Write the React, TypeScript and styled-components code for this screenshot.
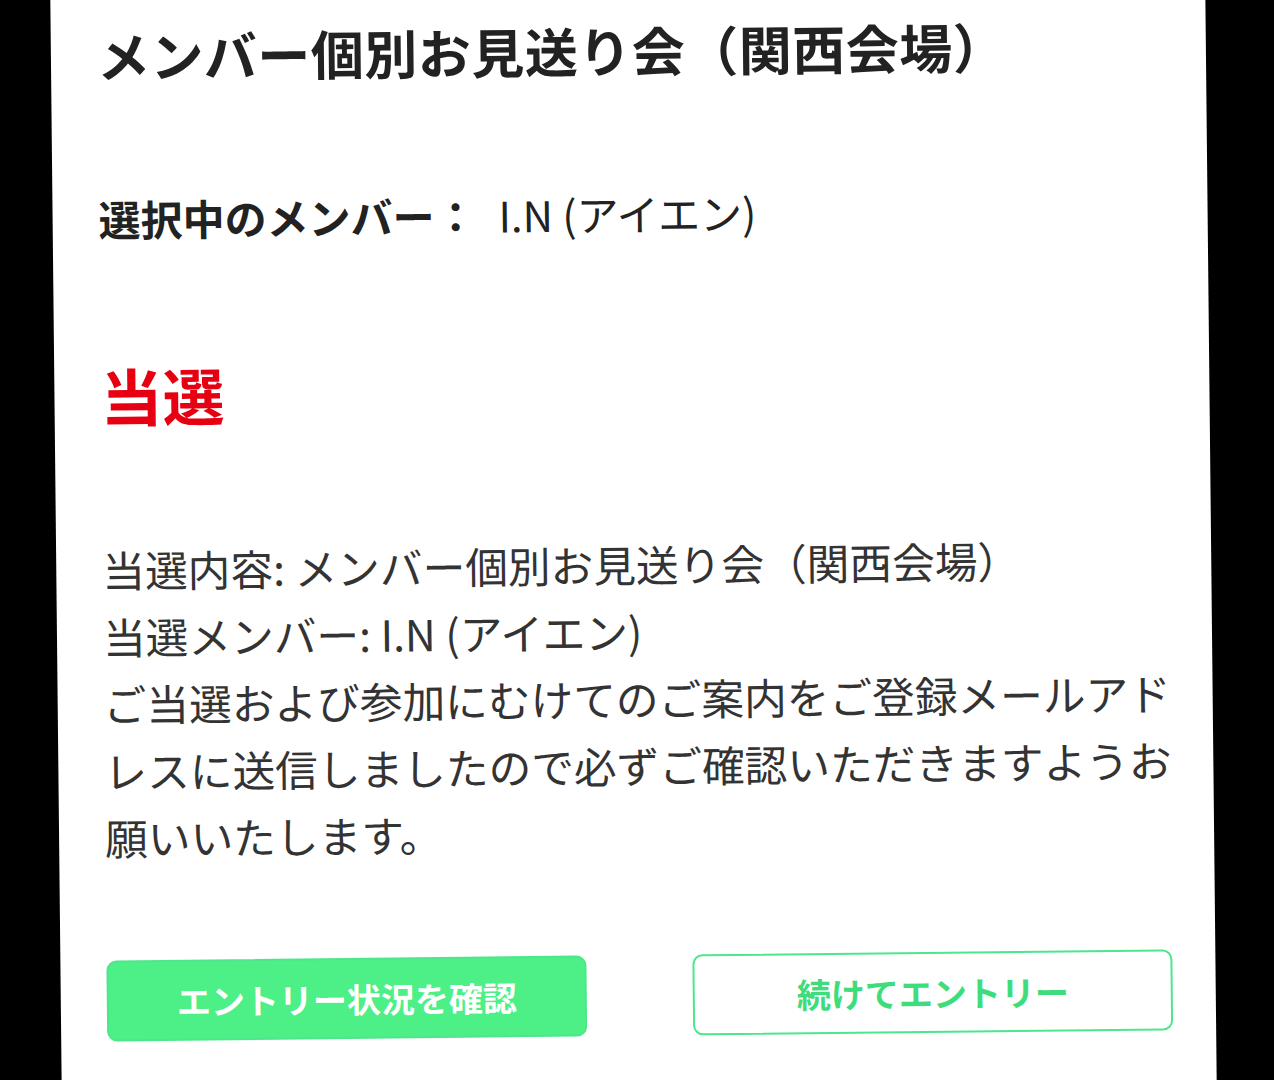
import React from 'react'
import styled, { createGlobalStyle } from 'styled-components'

const GlobalStyle = createGlobalStyle`
    html, body {
        margin: 0;
        padding: 0;
        background: #000;
        overflow: hidden;
    }

    body {
        font-family: "Noto Sans CJK JP", "Noto Sans", sans-serif;
    }
`

const Screen = styled.div`
    width: 1274px;
    height: 1080px;
    overflow: hidden;
    background: #000;
`

// the photographed screen is tilted a little, so the sheet is too
const Sheet = styled.main`
    box-sizing: border-box;
    display: flex;
    flex-direction: column;

    width: 1155px;
    height: 1200px;
    margin: -60px 0 0 56px;
    padding: 60px 30px 0 46px;

    background: #fff;
    transform: rotate(-0.6deg);
`

const Title = styled.h1`
    margin: 14px 0 0;

    font-size: 53px;
    font-weight: 700;
    line-height: 70px;
    letter-spacing: 0.5px;
    white-space: nowrap;

    color: #222;
`

const MemberLine = styled.div`
    margin-top: 99px;

    font-size: 42px;
    line-height: 60px;
    white-space: nowrap;

    color: #222;
`

const MemberLabel = styled.span`
    font-weight: 700;
`

const MemberValue = styled.span`
    margin-left: 22px;

    font-weight: 400;
`

const Result = styled.div`
    margin-top: 106px;

    font-size: 62px;
    font-weight: 700;
    line-height: 80px;

    color: #e60012;
`

const Message = styled.p`
    width: 1080px;
    margin: 101px 0 0;

    font-size: 42.7px;
    font-weight: 400;
    line-height: 67px;

    color: #333;
`

const Actions = styled.div`
    display: flex;
    gap: 106px;

    margin-top: 90px;
`

const ActionButton = styled.button<{ $filled?: boolean }>`
    box-sizing: border-box;
    display: flex;
    align-items: center;
    justify-content: center;

    width: 480px;
    height: 81px;

    font-family: inherit;
    font-size: 34px;
    font-weight: 700;

    cursor: pointer;

    color: ${p => p.$filled ? '#fff' : '#3fdc7c'};
    border: 2px solid #4ee68a;
    border-radius: 10px;
    background: ${p => p.$filled ? '#4def87' : '#fff'};
`

export default function App() {
    return (
        <Screen>
            <GlobalStyle />
            <Sheet>
                <Title>メンバー個別お見送り会（関西会場）</Title>

                <MemberLine>
                    <MemberLabel>選択中のメンバー：</MemberLabel>
                    <MemberValue>I.N (アイエン)</MemberValue>
                </MemberLine>

                <Result>当選</Result>

                <Message>
                    当選内容: メンバー個別お見送り会（関西会場）<br />
                    当選メンバー: I.N (アイエン)<br />
                    ご当選および参加にむけてのご案内をご登録メールアドレスに送信しましたので必ずご確認いただきますようお願いいたします。
                </Message>

                <Actions>
                    <ActionButton $filled>エントリー状況を確認</ActionButton>
                    <ActionButton>続けてエントリー</ActionButton>
                </Actions>
            </Sheet>
        </Screen>
    )
}
